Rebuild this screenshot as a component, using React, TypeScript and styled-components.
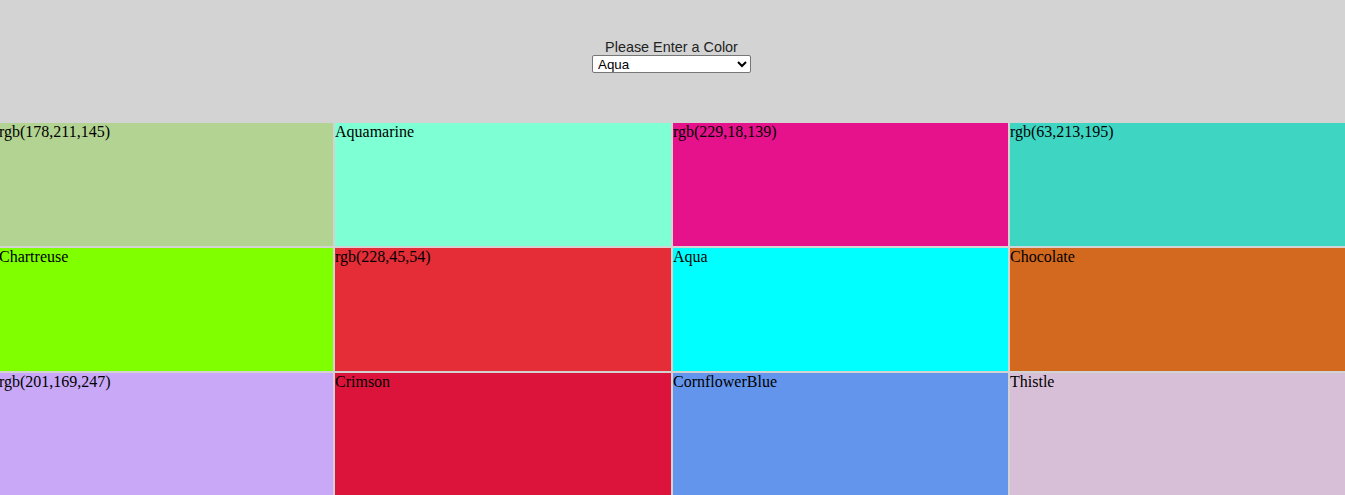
import React, { useState } from 'react';
import styled, { createGlobalStyle } from 'styled-components';

const GlobalStyle = createGlobalStyle`
  html, body {
    margin: 0;
    padding: 0;
    background-color: #d3d3d3;
  }
`;

const Page = styled.div`
  width: 100%;
  height: 495px;
  overflow: hidden;
  background-color: #d3d3d3;
`;

const Header = styled.header`
  height: 123px;
  box-sizing: border-box;
  padding: 39px 2px 0 0;
  display: flex;
  flex-direction: column;
  align-items: center;
`;

const Label = styled.label`
  font-family: 'Liberation Sans', Arial, sans-serif;
  font-size: 14.4px;
  line-height: 16px;
  color: #222;
`;

const ColorSelect = styled.select`
  width: 159px;
  height: 18px;
  box-sizing: border-box;
  font-family: 'Liberation Sans', Arial, sans-serif;
  font-size: 13.33px;
  color: #000;
  background-color: #fff;
  border: 1px solid #767676;
  border-radius: 2px;
  padding: 0 0 0 1px;
`;

const Grid = styled.div`
  display: grid;
  grid-template-columns: 334px 336px 335px 1fr;
  grid-auto-rows: 123px;
  gap: 2px;
  margin-left: -1px;
  background-color: #d3d3d3;
`;

const Cell = styled.div<{ $bg: string }>`
  background-color: ${({ $bg }) => $bg};
  font-family: 'Liberation Serif', 'Times New Roman', serif;
  font-size: 16px;
  line-height: 18px;
  color: #000;
  overflow: hidden;
`;

const cells = [
  { name: 'rgb(178,211,145)', bg: 'rgb(178,211,145)' },
  { name: 'Aquamarine', bg: 'aquamarine' },
  { name: 'rgb(229,18,139)', bg: 'rgb(229,18,139)' },
  { name: 'rgb(63,213,195)', bg: 'rgb(63,213,195)' },
  { name: 'Chartreuse', bg: 'chartreuse' },
  { name: 'rgb(228,45,54)', bg: 'rgb(228,45,54)' },
  { name: 'Aqua', bg: 'aqua' },
  { name: 'Chocolate', bg: 'chocolate' },
  { name: 'rgb(201,169,247)', bg: 'rgb(201,169,247)' },
  { name: 'Crimson', bg: 'crimson' },
  { name: 'CornflowerBlue', bg: 'cornflowerblue' },
  { name: 'Thistle', bg: 'thistle' },
];

const options = ['Aqua', 'Aquamarine', 'Chartreuse', 'Chocolate', 'CornflowerBlue', 'Crimson', 'Thistle'];

export default function App() {
  const [color, setColor] = useState('Aqua');

  return (
    <Page>
      <GlobalStyle />
      <Header>
        <Label htmlFor="color">Please Enter a Color</Label>
        <ColorSelect id="color" value={color} onChange={(e) => setColor(e.target.value)}>
          {options.map((o) => (
            <option key={o} value={o}>{o}</option>
          ))}
        </ColorSelect>
      </Header>
      <Grid>
        {cells.map((c, i) => (
          <Cell key={i} $bg={c.bg}>
            {c.name}
          </Cell>
        ))}
      </Grid>
    </Page>
  );
}
